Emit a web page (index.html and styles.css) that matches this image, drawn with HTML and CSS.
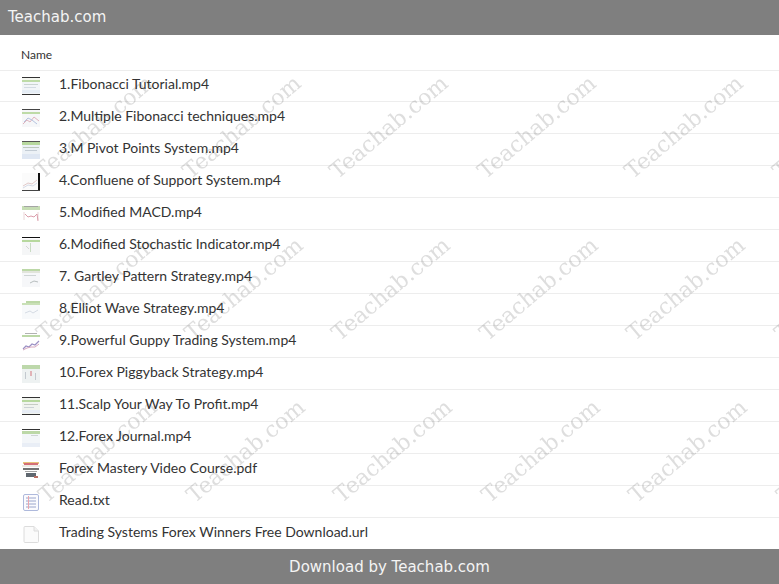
FILE: index.html
```html
<!DOCTYPE html>
<html lang="en">
<head>
    <meta charset="UTF-8">
    <meta name="viewport" content="width=device-width, initial-scale=1.0">
    <title>Teachab.com</title>
    <link rel="stylesheet" href="styles.css">
</head>
<body>
    <svg class="defs" width="0" height="0" aria-hidden="true">
        <filter id="soft"><feGaussianBlur stdDeviation="0.6"/></filter>
        <symbol id="thumb-a" viewBox="0 0 18 18">
            <g filter="url(#soft)">
                <rect width="18" height="18" fill="#eef2f6"/>
                <rect y="1" width="18" height="3" fill="#f4f6ee"/>
                <rect y="3" width="18" height="2" fill="#a9cf8a"/>
                <rect x="2" y="7" width="14" height="1" fill="#b9c6c2"/>
                <rect x="2" y="10" width="12" height="1" fill="#c5d0da"/>
                <rect y="13" width="18" height="3" fill="#dde7f2"/>
            </g>
            <rect width="18" height="1" fill="#333"/>
            <rect y="17" width="18" height="1" fill="#333"/>
        </symbol>
        <symbol id="thumb-b" viewBox="0 0 18 18">
            <g filter="url(#soft)">
                <rect width="18" height="18" fill="#f4f5f7"/>
                <rect y="3" width="18" height="2" fill="#a9cf8a"/>
                <path d="M1 15 5 11 8 13 12 8 17 12" fill="none" stroke="#d59aa8" stroke-width="1"/>
                <path d="M2 13 6 9 10 11 15 15" fill="none" stroke="#9cb0d6" stroke-width="1"/>
            </g>
            <rect width="18" height="1" fill="#444"/>
        </symbol>
        <symbol id="thumb-c" viewBox="0 0 18 18">
            <g filter="url(#soft)">
                <rect width="18" height="18" fill="#e6edf3"/>
                <rect y="1" width="18" height="3" fill="#9fcb7e"/>
                <rect x="1" y="6" width="16" height="1" fill="#a8b8a8"/>
                <rect x="3" y="9" width="12" height="1" fill="#b0bcc8"/>
                <rect y="13" width="18" height="5" fill="#d5e0f0"/>
            </g>
            <rect width="18" height="1" fill="#555"/>
        </symbol>
        <symbol id="thumb-d" viewBox="0 0 18 18">
            <g filter="url(#soft)">
                <rect width="18" height="18" fill="#fafafa"/>
                <path d="M1 13 6 10 10 11 15 7" fill="none" stroke="#d8b8b8" stroke-width="1"/>
                <path d="M1 15 6 12 11 13 15 10" fill="none" stroke="#c8d0e0" stroke-width="1"/>
            </g>
            <rect x="16" width="2" height="18" fill="#111"/>
            <rect y="17" width="18" height="1" fill="#444"/>
        </symbol>
        <symbol id="thumb-e" viewBox="0 0 18 18">
            <g filter="url(#soft)">
                <rect y="1" width="18" height="4" fill="#b3d29c"/>
                <rect x="2" y="1" width="14" height="1" fill="#888"/>
                <path d="M2 7V15M16 7V15" stroke="#e4c8cc" stroke-width="1"/>
                <path d="M3 9 6 12 9 11 12 12 15 9 16 16" fill="none" stroke="#cf7f90" stroke-width="1"/>
            </g>
        </symbol>
        <symbol id="thumb-f" viewBox="0 0 18 18">
            <g filter="url(#soft)">
                <rect y="2" width="18" height="16" fill="#f2f3f5"/>
                <rect y="3" width="18" height="2" fill="#9fcb7e"/>
                <rect x="8" y="6" width="1" height="9" fill="#b8d0b0"/>
                <path d="M4 9 7 12" stroke="#c8c8c8" stroke-width="1"/>
            </g>
            <rect width="18" height="1" fill="#111"/>
        </symbol>
        <symbol id="thumb-g" viewBox="0 0 18 18">
            <g filter="url(#soft)">
                <rect y="4" width="18" height="14" fill="#f3f5f8"/>
                <rect width="18" height="2" fill="#a6cc8a"/>
                <rect y="2" width="18" height="2" fill="#d8dcd0"/>
                <rect x="2" y="6" width="12" height="1" fill="#c0c8c8"/>
                <path d="M8 14 12 12 16 13" stroke="#a0a8a8" fill="none"/>
            </g>
        </symbol>
        <symbol id="thumb-h" viewBox="0 0 18 18">
            <g filter="url(#soft)">
                <rect y="3" width="18" height="15" fill="#f5f7fa"/>
                <rect x="4" width="14" height="2" fill="#a6cc8a"/>
                <rect y="2" width="18" height="2" fill="#b8d6a0"/>
                <path d="M3 12 8 10 11 12 16 9" stroke="#c8d0dc" fill="none"/>
            </g>
        </symbol>
        <symbol id="thumb-i" viewBox="0 0 18 18">
            <g filter="url(#soft)">
                <rect x="3" width="12" height="1" fill="#999"/>
                <rect y="2" width="18" height="2" fill="#a6cc8a"/>
                <path d="M1 16 4 13 7 14 10 11 13 12 17 8" stroke="#7a6bb0" stroke-width="1.2" fill="none"/>
                <path d="M1 17 5 15 9 14 13 14 17 11" stroke="#c88aa8" stroke-width="1" fill="none"/>
            </g>
        </symbol>
        <symbol id="thumb-j" viewBox="0 0 18 18">
            <g filter="url(#soft)">
                <rect width="18" height="18" fill="#e9eeee"/>
                <rect width="18" height="4" fill="#a8cc90"/>
                <rect x="3" y="7" width="1" height="7" fill="#b0b8c0"/>
                <rect x="8" y="6" width="2" height="5" fill="#d89aa0"/>
                <rect x="13" y="8" width="1" height="7" fill="#b0b8c0"/>
            </g>
        </symbol>
        <symbol id="thumb-k" viewBox="0 0 18 18">
            <g filter="url(#soft)">
                <rect width="18" height="18" fill="#edf1ea"/>
                <rect y="3" width="18" height="2" fill="#9fcb7e"/>
                <rect x="2" y="7" width="14" height="1" fill="#b4bdb0"/>
                <rect x="2" y="10" width="10" height="1" fill="#bcc4c8"/>
                <rect y="13" width="18" height="3" fill="#dfe8f2"/>
            </g>
            <rect width="18" height="1" fill="#333"/>
            <rect y="17" width="18" height="1" fill="#333"/>
        </symbol>
        <symbol id="thumb-l" viewBox="0 0 18 18">
            <g filter="url(#soft)">
                <rect y="2" width="18" height="16" fill="#f0f3f8"/>
                <rect y="2" width="18" height="3" fill="#a6cc8a"/>
                <rect x="9" y="6" width="7" height="1" fill="#c0c8c8"/>
                <rect y="14" width="18" height="4" fill="#e2e9f4"/>
            </g>
            <rect width="18" height="1" fill="#333"/>
        </symbol>
        <symbol id="thumb-pdf" viewBox="0 0 18 18">
            <g filter="url(#soft)">
                <rect x="1" y="1" width="16" height="2" fill="#e0b050"/>
                <rect x="2" y="2" width="14" height="2" fill="#c8404a"/>
                <rect y="4" width="18" height="2" fill="#e8e4dc"/>
                <rect x="1" y="7" width="16" height="2" fill="#444"/>
                <rect x="3" y="10" width="12" height="1" fill="#888"/>
                <rect x="4" y="12" width="10" height="4" fill="#2a3440"/>
                <rect x="12" y="15" width="4" height="2" fill="#a04030"/>
            </g>
        </symbol>
    </svg>

    <header class="topbar">Teachab.com</header>

    <main class="files">
        <div class="files-head">Name</div>
        <ul class="file-list">
            <li class="file"><svg class="thumb"><use href="#thumb-a"/></svg><span class="file-name">1.Fibonacci Tutorial.mp4</span></li>
            <li class="file"><svg class="thumb"><use href="#thumb-b"/></svg><span class="file-name">2.Multiple Fibonacci techniques.mp4</span></li>
            <li class="file"><svg class="thumb"><use href="#thumb-c"/></svg><span class="file-name">3.M Pivot Points System.mp4</span></li>
            <li class="file"><svg class="thumb"><use href="#thumb-d"/></svg><span class="file-name">4.Confluene of Support System.mp4</span></li>
            <li class="file"><svg class="thumb"><use href="#thumb-e"/></svg><span class="file-name">5.Modified MACD.mp4</span></li>
            <li class="file"><svg class="thumb"><use href="#thumb-f"/></svg><span class="file-name">6.Modified Stochastic Indicator.mp4</span></li>
            <li class="file"><svg class="thumb"><use href="#thumb-g"/></svg><span class="file-name">7. Gartley Pattern Strategy.mp4</span></li>
            <li class="file"><svg class="thumb"><use href="#thumb-h"/></svg><span class="file-name">8.Elliot Wave Strategy.mp4</span></li>
            <li class="file"><svg class="thumb"><use href="#thumb-i"/></svg><span class="file-name">9.Powerful Guppy Trading System.mp4</span></li>
            <li class="file"><svg class="thumb"><use href="#thumb-j"/></svg><span class="file-name">10.Forex Piggyback Strategy.mp4</span></li>
            <li class="file"><svg class="thumb"><use href="#thumb-k"/></svg><span class="file-name">11.Scalp Your Way To Profit.mp4</span></li>
            <li class="file"><svg class="thumb"><use href="#thumb-l"/></svg><span class="file-name">12.Forex Journal.mp4</span></li>
            <li class="file"><svg class="thumb"><use href="#thumb-pdf"/></svg><span class="file-name">Forex Mastery Video Course.pdf</span></li>
            <li class="file">
                <svg class="thumb" viewBox="0 0 18 18">
                    <rect x="1.500" y="1.500" width="15" height="16" rx="1.500" fill="#fbfbfe" stroke="#aeb9dc"/>
                    <path d="M4 5H14M4 8H14M4 11H14M4 14H14" stroke="#9aa6cc"/>
                    <path d="M6.500 3V16" stroke="#eba5ad"/>
                </svg>
                <span class="file-name">Read.txt</span>
            </li>
            <li class="file">
                <svg class="thumb" viewBox="0 0 18 18">
                    <path d="M3 1.500H12L16.500 6V16.500A1 1 0 0 1 15.500 17.500H3A1 1 0 0 1 2 16.500V2.500A1 1 0 0 1 3 1.500Z" fill="#fbfbfb" stroke="#dcdcdc"/>
                    <path d="M12 1.500V6H16.500" fill="#f2f2f2" stroke="#dcdcdc"/>
                </svg>
                <span class="file-name">Trading Systems Forex Winners Free Download.url</span>
            </li>
        </ul>
    </main>

    <footer class="bottombar">Download by Teachab.com</footer>

    <div class="watermarks" aria-hidden="true">
        <div class="mark-row"><span>Teachab.com</span><span>Teachab.com</span><span>Teachab.com</span><span>Teachab.com</span><span>Teachab.com</span><span>Teachab.com</span></div>
        <div class="mark-row"><span>Teachab.com</span><span>Teachab.com</span><span>Teachab.com</span><span>Teachab.com</span><span>Teachab.com</span><span>Teachab.com</span></div>
        <div class="mark-row"><span>Teachab.com</span><span>Teachab.com</span><span>Teachab.com</span><span>Teachab.com</span><span>Teachab.com</span><span>Teachab.com</span></div>
    </div>
</body>
</html>
```

FILE: styles.css
```css
* {
    box-sizing: border-box;
}
html, body {
    height: 100%;
}
body {
    margin: 0;
    display: flex;
    flex-direction: column;
    font-family: Lato, "Open Sans", sans-serif;
    color: #333;
    background-color: #fff;
    overflow: hidden;
}
.defs {
    position: absolute;
}
symbol g {
    opacity: 0.75;
}
.topbar {
    flex: none;
    height: 35px;
    line-height: 35px;
    padding-left: 8px;
    font-family: "DejaVu Sans", sans-serif;
    font-size: 15px;
    color: #f4f4f4;
    background-color: #7f7f7f;
}
.files {
    flex: 1;
}
.files-head {
    height: 36px;
    line-height: 39px;
    padding-left: 21px;
    font-size: 12px;
    border-bottom: 1px solid #ededed;
}
.file-list {
    margin: 0;
    padding: 0;
    list-style: none;
}
.file {
    display: flex;
    align-items: center;
    gap: 19px;
    height: 32px;
    padding-left: 22px;
    font-size: 14px;
    border-bottom: 1px solid #ededed;
}
.file:first-child {
    height: 31px;
}
.file:last-child {
    height: 31px;
    border-bottom: none;
}
.file-name {
    padding-bottom: 4px;
}
.file:first-child .file-name {
    padding-bottom: 5px;
}
.thumb {
    flex: none;
    width: 18px;
    height: 18px;
}
.bottombar {
    flex: none;
    height: 35px;
    line-height: 36px;
    text-align: center;
    font-family: "DejaVu Sans", sans-serif;
    font-size: 15px;
    color: #f4f4f4;
    background-color: #7f7f7f;
}
.watermarks {
    position: absolute;
    top: 157px;
    left: 47px;
    display: flex;
    flex-direction: column;
    gap: 134px;
    pointer-events: none;
    mix-blend-mode: multiply;
}
.mark-row {
    display: flex;
    height: 28px;
}
.mark-row:nth-child(2) {
    margin-left: 2px;
}
.mark-row:nth-child(3) {
    margin-left: 4px;
}
.mark-row span {
    flex: none;
    width: 147.500px;
    font-family: "DejaVu Serif", serif;
    font-size: 22px;
    line-height: 28px;
    white-space: nowrap;
    color: #dedede;
    transform: rotate(-40deg);
    transform-origin: 0 100%;
}
```
